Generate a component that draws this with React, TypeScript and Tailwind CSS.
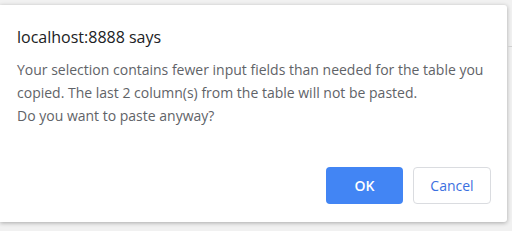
import React from "react";

export default function App() {
  return (
    <div className="w-[512px] h-[231px] bg-[#f1f1f1] overflow-hidden relative" style={{ fontFamily: '"Open Sans", "Noto Sans", sans-serif' }}>
      <div className="absolute right-0 top-[46px] w-[4px] h-px bg-[#d0d0d0]" />
      <div className="mt-[5px] w-[507px] h-[217px] bg-white rounded-r-[3px] shadow-[0_1px_4px_rgba(0,0,0,0.3)] flex flex-col pl-[17px] pr-[16px] pt-[21px]">
        <div className="text-[16px] leading-[22px] text-[#202124]">localhost:8888 says</div>
        <div className="mt-[10px] text-[14px] leading-[23px] text-[#5f6368]">
          <div>Your selection contains fewer input fields than needed for the table you</div>
          <div>copied. The last 2 column(s) from the table will not be pasted.</div>
          <div>Do you want to paste anyway?</div>
        </div>
        <div className="mt-auto mb-[18px] flex justify-end gap-[10px]">
          <button className="w-[77px] h-[37px] rounded-[4px] bg-[#4285f4] text-white text-[14px] font-semibold">OK</button>
          <button className="w-[78px] h-[37px] rounded-[4px] border border-[#dadce0] bg-white text-[#3b6fe0] text-[14px] font-medium">Cancel</button>
        </div>
      </div>
    </div>
  );
}
